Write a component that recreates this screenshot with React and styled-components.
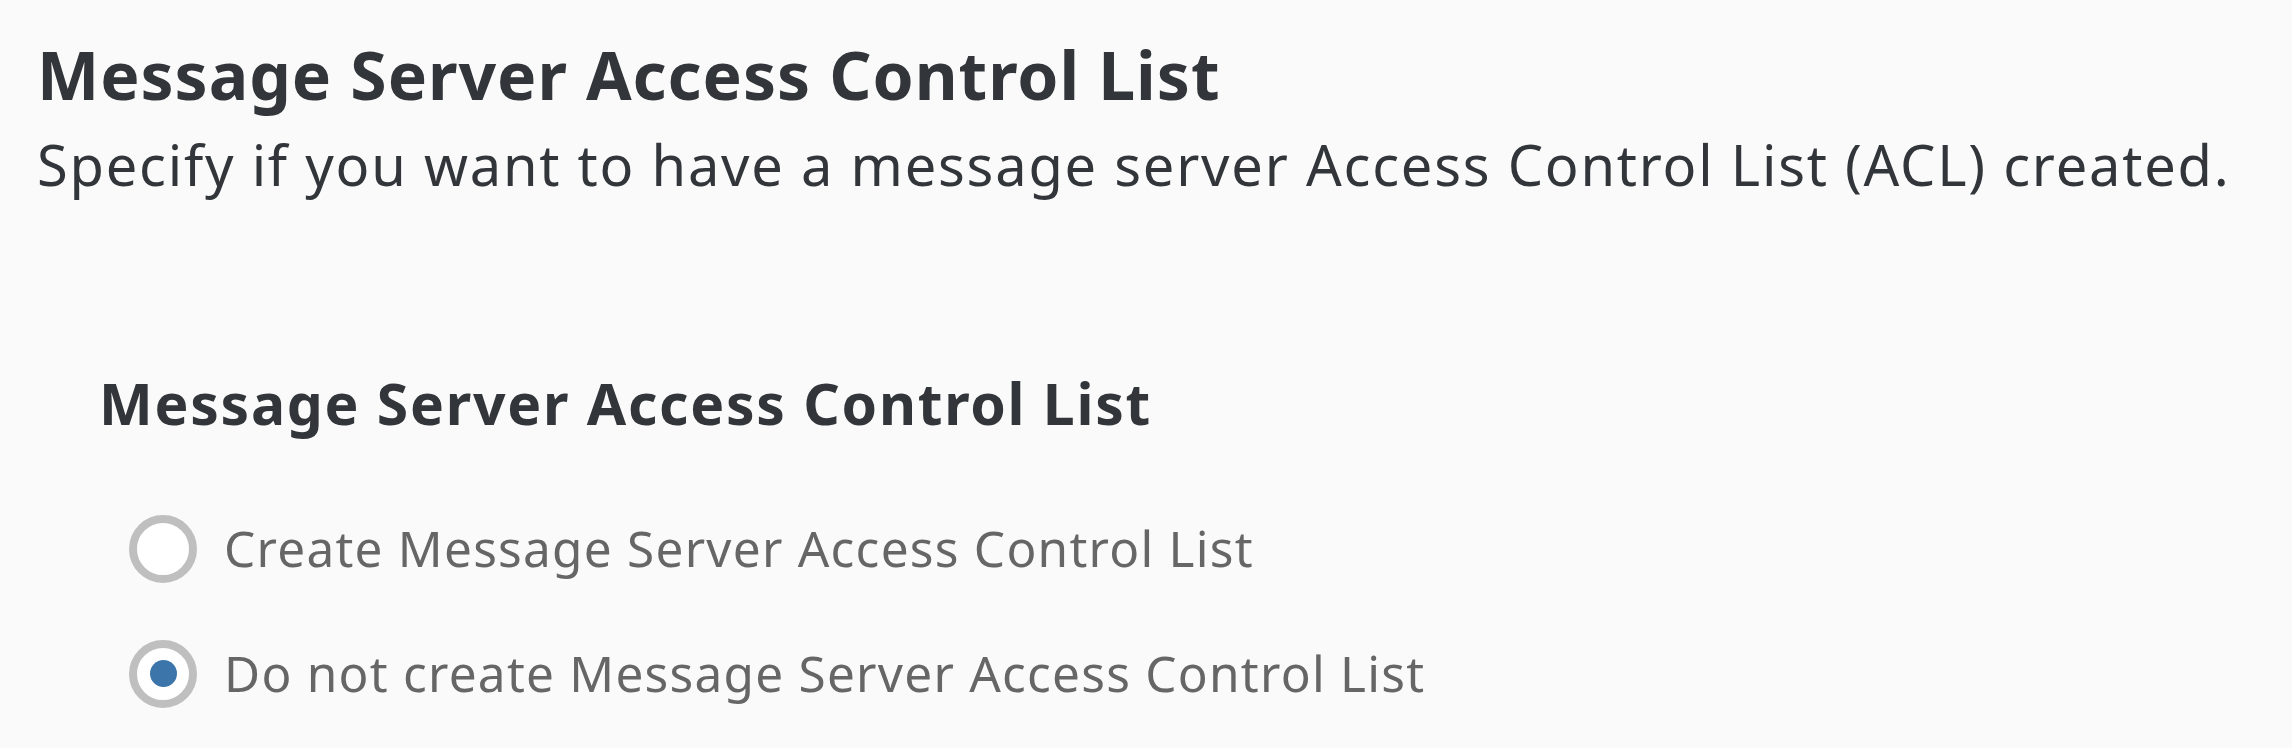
import React, { useState } from "react";
import styled, { createGlobalStyle } from "styled-components";

const GlobalStyle = createGlobalStyle`
  html, body {
    margin: 0;
    padding: 0;
    background: #fafafa;
  }
  body {
    font-family: "Noto Sans", "Open Sans", sans-serif;
  }
`;

const Page = styled.main`
  min-height: 748px;
  box-sizing: border-box;
  padding: 34px 0 0 37px;
  background: #fafafa;
`;

const Title = styled.h1`
  margin: 0;
  font-size: 66px;
  line-height: 80px;
  font-weight: 700;
  letter-spacing: 0.95px;
  color: #32363a;
`;

const Subtitle = styled.p`
  margin: 16px 0 0;
  font-size: 56px;
  line-height: 68px;
  font-weight: 400;
  letter-spacing: 1.77px;
  color: #32363a;
  white-space: nowrap;
`;

const Section = styled.section`
  margin-top: 171px;
  padding-left: 62px;
`;

const SectionTitle = styled.h2`
  margin: 0;
  font-size: 57px;
  line-height: 68px;
  font-weight: 700;
  letter-spacing: 1.73px;
  color: #32363a;
`;

const RadioGroup = styled.div`
  margin: 49px 0 0 30px;
  display: flex;
  flex-direction: column;
`;

const Option = styled.label`
  display: flex;
  align-items: center;
  gap: 27px;
  height: 125px;
  cursor: pointer;
`;

const RadioInput = styled.input`
  appearance: none;
  -webkit-appearance: none;
  margin: 0;
  flex: none;
  width: 68px;
  height: 68px;
  box-sizing: border-box;
  border-radius: 50%;
  border: 8px solid #bfbfbf;
  background: #ffffff;
  display: grid;
  place-items: center;
  cursor: pointer;

  &::after {
    content: "";
    width: 27px;
    height: 27px;
    border-radius: 50%;
    background: ${(p) => (p.checked ? "#3b75a9" : "transparent")};
  }
`;

const OptionText = styled.span`
  font-size: 49.5px;
  line-height: 125px;
  letter-spacing: 1.25px;
  color: #666666;
  white-space: nowrap;
`;

const options = [
  { id: "create", label: "Create Message Server Access Control List" },
  { id: "none", label: "Do not create Message Server Access Control List" },
];

export default function App() {
  const [value, setValue] = useState("none");
  return (
    <>
      <GlobalStyle />
      <Page>
        <Title>Message Server Access Control List</Title>
        <Subtitle>
          Specify if you want to have a message server Access Control List (ACL) created.
        </Subtitle>
        <Section>
          <SectionTitle>Message Server Access Control List</SectionTitle>
          <RadioGroup role="radiogroup">
            {options.map((o) => (
              <Option key={o.id}>
                <RadioInput
                  type="radio"
                  name="acl"
                  value={o.id}
                  checked={value === o.id}
                  onChange={() => setValue(o.id)}
                />
                <OptionText>{o.label}</OptionText>
              </Option>
            ))}
          </RadioGroup>
        </Section>
      </Page>
    </>
  );
}
